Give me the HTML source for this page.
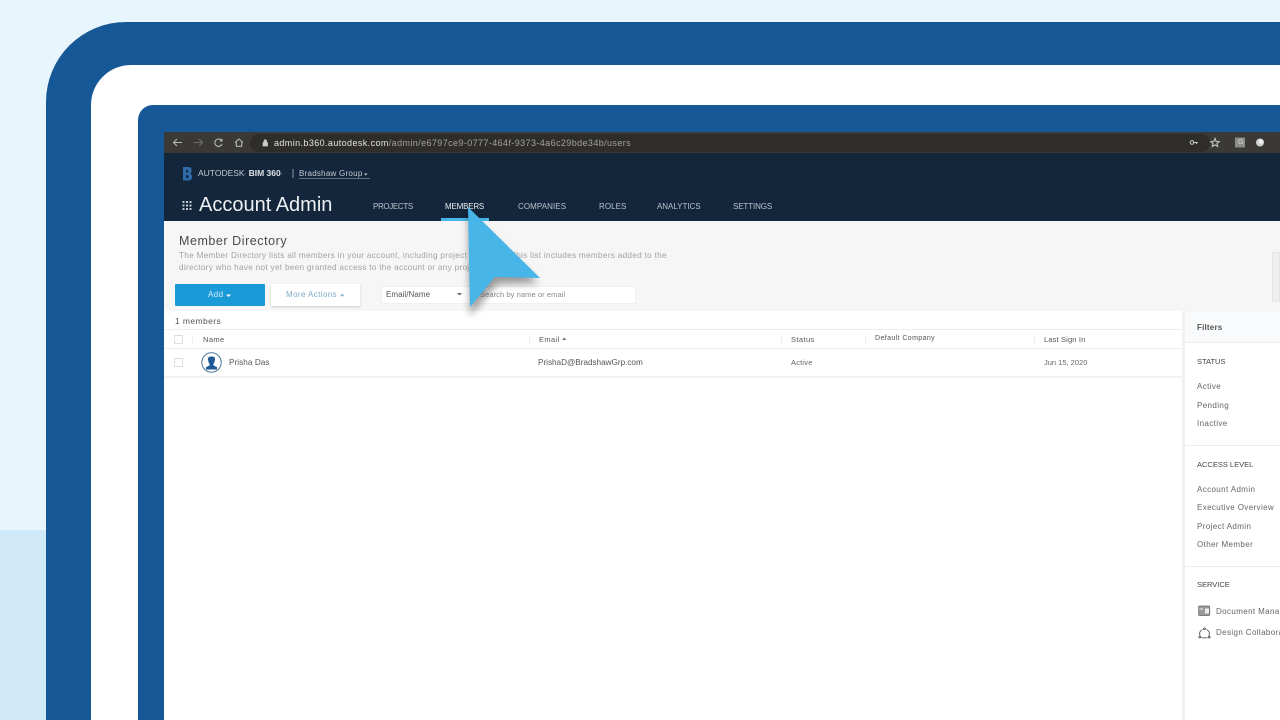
<!DOCTYPE html>
<html><head><meta charset="utf-8"><style>
html,body{margin:0;padding:0;width:1280px;height:720px;overflow:hidden;background:#e7f5fd}
body{position:relative;font-family:"Liberation Sans",sans-serif}
div,span.t{position:absolute;box-sizing:border-box}
.t{white-space:nowrap;line-height:12px;font-size:8px;color:#555;letter-spacing:.35px}
.nav{color:#b9c2cb;font-size:8px;top:201px}
.h{color:#555;font-size:7.5px;top:334px;letter-spacing:.4px}
.fl{color:#666;font-size:8px;letter-spacing:.38px;left:1197px}
.fh{color:#444;font-size:7.5px;letter-spacing:0;left:1197px}
.line{height:1px;background:#eeeeee}
svg{position:absolute;left:0;top:0}
</style></head><body>
<div style="left:0;top:530px;width:46px;height:190px;background:#cfe9f9"></div>
<div style="left:46px;top:22px;right:0;bottom:0;background:#165795;border-radius:80px 0 0 0"></div>
<div style="left:91px;top:65px;right:0;bottom:0;background:#fff;border-radius:40px 0 0 0"></div>
<div style="left:138px;top:105px;right:0;bottom:0;background:#165795;border-radius:15px 0 0 0"></div>
<div style="left:164px;top:132px;right:0;bottom:0;background:#fff"></div>
<div style="left:164px;top:132px;width:1116px;height:22px;background:#3a3936"></div>
<div style="left:250px;top:134px;width:960px;height:18px;background:#2e2d2a;border-radius:9px"></div>
<div style="left:164px;top:153px;width:1116px;height:68px;background:#13263c"></div>
<div style="left:164px;top:221px;width:1116px;height:91px;background:#f6f6f6"></div>

<svg width="1280" height="720" fill="none" stroke="#b5b5b3" stroke-width="1.1">
<path d="M182 142.500H173.500M177 139L173.500 142.500L177 146"/>
<path d="M194 142.500H202.500M199 139L202.500 142.500L199 146" stroke="#6d6c69"/>
<path d="M221.500 140.500A3.700 3.700 0 1 0 222 144M222 138.800V141H219.800"/>
<path d="M235 142.500L239 139L243 142.500M236.300 141.800V146.300H241.700V141.800"/>
<path d="M263 142.500V146H267.500V142.500H263M264 142.500V141A1.200 1.200 0 0 1 266.500 141V142.500" fill="#c9c9c7" stroke="#c9c9c7" stroke-width=".7"/>
<circle cx="1192" cy="142.500" r="1.800" stroke="#c5c5c3"/>
<path d="M1194 142.500H1198M1196.500 142.500V144" stroke="#c5c5c3"/>
<path d="M1215 138.500L1216.200 141.500L1219.200 141.700L1216.900 143.600L1217.700 146.500L1215 144.900L1212.300 146.500L1213.100 143.600L1210.800 141.700L1213.800 141.500Z" stroke="#c5c5c3"/>
<rect x="1235" y="137.500" width="10" height="10" fill="#8c8c8c" stroke="none"/>
<circle cx="1260" cy="142.500" r="4" fill="#cfcfcf" stroke="none"/>
<circle cx="1261" cy="141.500" r="2.200" fill="#f4f4f4" stroke="none"/>
<path d="M183 167H188.500C192.500 167 192.500 173 189.800 173.800C193.300 174.600 193.300 180.500 188.500 180.500H183Z" fill="#2e6ba8" stroke="none"/>
<path d="M186 170H188V172.500H186ZM186 175.200H188.500V178H186Z" fill="#13263c" stroke="none"/>
<path d="M293 169V178" stroke="#aeb6be" stroke-width=".8"/>
<path d="M299 178.500H370" stroke="#aeb6be" stroke-width=".6"/>
<g fill="#c4cbd2" stroke="none">
<rect x="182.500" y="201" width="2" height="2"/><rect x="186" y="201" width="2" height="2"/><rect x="189.500" y="201" width="2" height="2"/>
<rect x="182.500" y="204.500" width="2" height="2"/><rect x="186" y="204.500" width="2" height="2"/><rect x="189.500" y="204.500" width="2" height="2"/>
<rect x="182.500" y="208" width="2" height="2"/><rect x="186" y="208" width="2" height="2"/><rect x="189.500" y="208" width="2" height="2"/>
</g>
</svg>

<span class="t" style="left:1238px;top:137px;font-size:7px;color:#d8d8d8;letter-spacing:0">G</span>
<span class="t" style="left:274px;top:137px;font-size:9px;color:#e3e3e1;letter-spacing:.4px">admin.b360.autodesk.com<span style="color:#a3a29f">/admin/e6797ce9-0777-464f-9373-4a6c29bde34b/users</span></span>
<span class="t" style="left:198px;top:167px;font-size:8.500px;color:#c3cad1;letter-spacing:0">AUTODESK<span style="font-size:4px">&#176;</span> <b style="color:#dfe3e7;letter-spacing:0">BIM 360</b><span style="font-size:4px">&#176;</span></span>
<span class="t" style="left:299px;top:168px;font-size:8px;color:#c3cad1;letter-spacing:.25px">Bradshaw Group</span>
<span class="t" style="left:199px;top:194px;font-size:20px;line-height:22px;color:#eef1f3;letter-spacing:0">Account Admin</span>
<span class="t nav" style="left:373px;letter-spacing:-.35px">PROJECTS</span>
<span class="t nav" style="left:445px;color:#e8ecef;letter-spacing:-.2px">MEMBERS</span>
<span class="t nav" style="left:518px;letter-spacing:.08px">COMPANIES</span>
<span class="t nav" style="left:599px;letter-spacing:.05px">ROLES</span>
<span class="t nav" style="left:657px;letter-spacing:-.03px">ANALYTICS</span>
<span class="t nav" style="left:733px;letter-spacing:-.12px">SETTINGS</span>
<div style="left:441px;top:218px;width:48px;height:3px;background:#47b5e8"></div>

<span class="t" style="left:179px;top:234px;font-size:12.500px;line-height:14px;color:#4a4a4a;letter-spacing:.55px">Member Directory</span>
<span class="t" style="left:179px;top:250px;font-size:8.200px;color:#a2a2a2;letter-spacing:.3px">The Member Directory lists all members in your account, including project members. This list includes members added to the</span>
<span class="t" style="left:179px;top:262px;font-size:8.200px;color:#a2a2a2;letter-spacing:.3px">directory who have not yet been granted access to the account or any projects.</span>

<div style="left:175px;top:284px;width:90px;height:22px;background:#1b9ad8;border-radius:1px"></div>
<span class="t" style="left:208px;top:289px;color:#d5effb;font-size:8px;letter-spacing:.45px">Add</span>
<div style="left:271px;top:284px;width:89px;height:22px;background:#fff;box-shadow:0 1px 2px rgba(0,0,0,.18)"></div>
<span class="t" style="left:286px;top:289px;color:#7ba9c4;font-size:8px;letter-spacing:.4px">More Actions</span>
<div style="left:381px;top:286px;width:255px;height:18px;background:#fff;border:1px solid #f0f0f0"></div>
<span class="t" style="left:386px;top:289px;color:#555;font-size:8px;letter-spacing:.05px">Email/Name</span>
<span class="t" style="left:480px;top:289px;color:#8a8a8a;font-size:7.500px;letter-spacing:.08px">Search by name or email</span>
<div style="left:1272px;top:252px;width:8px;height:50px;background:#efefef;border:1px solid #e6e6e6"></div>

<div style="left:164px;top:311px;width:1018px;height:409px;background:#fff"></div>
<span class="t" style="left:175px;top:315px;font-size:8.500px;color:#555;letter-spacing:.4px">1 members</span>
<div class="line" style="left:164px;top:329px;width:1018px"></div>
<div style="left:174px;top:335px;width:9px;height:9px;border:1px solid #dedede"></div>
<div class="line" style="left:192px;top:336px;width:1px;height:8px"></div>
<span class="t h" style="left:203px">Name</span>
<div class="line" style="left:529px;top:336px;width:1px;height:8px"></div>
<span class="t h" style="left:539px">Email</span>
<div class="line" style="left:781px;top:336px;width:1px;height:8px"></div>
<span class="t h" style="left:791px">Status</span>
<div class="line" style="left:865px;top:336px;width:1px;height:8px"></div>
<span class="t h" style="left:875px;top:333px;font-size:7px">Default Company</span>
<div class="line" style="left:1034px;top:336px;width:1px;height:8px"></div>
<span class="t h" style="left:1044px;letter-spacing:.15px">Last Sign In</span>
<div class="line" style="left:164px;top:348px;width:1018px"></div>
<div style="left:174px;top:358px;width:9px;height:9px;border:1px solid #dedede"></div>
<svg style="left:201px;top:352px" width="21" height="21" viewBox="0 0 21 21">
<circle cx="10.500" cy="10.500" r="9.700" fill="#fff" stroke="#4c7896" stroke-width="1"/>
<path d="M7 6.500C7 3.800 14 3.800 14 6.500C14 9 13 11.500 12.300 12.300L12.300 13.300L16 15.300V17.500H5V15.300L8.700 13.300L8.700 12.300C8 11.500 7 9 7 6.500Z" fill="#1d5a96"/>
</svg>
<span class="t" style="left:229px;top:357px;font-size:8.200px;color:#555;letter-spacing:.05px">Prisha Das</span>
<span class="t" style="left:538px;top:357px;font-size:8.200px;color:#555;letter-spacing:-.02px">PrishaD@BradshawGrp.com</span>
<span class="t" style="left:791px;top:357px;font-size:7.500px;color:#666;letter-spacing:.2px">Active</span>
<span class="t" style="left:1044px;top:357px;font-size:7.500px;color:#666;letter-spacing:0">Jun 15, 2020</span>
<div class="line" style="left:164px;top:376px;width:1018px;height:2px;background:#f1f1f1"></div>

<div style="left:1182px;top:311px;width:3px;height:409px;background:#f1f1f1"></div>
<div style="left:1185px;top:312px;width:95px;height:31px;background:#f8fafc;border-bottom:1px solid #eee"></div>
<span class="t" style="left:1197px;top:322px;font-size:8px;color:#555;font-weight:bold;letter-spacing:.2px">Filters</span>
<span class="t fh" style="top:356px">STATUS</span>
<span class="t fl" style="top:381px">Active</span>
<span class="t fl" style="top:400px">Pending</span>
<span class="t fl" style="top:418px">Inactive</span>
<div class="line" style="left:1185px;top:445px;width:95px"></div>
<span class="t fh" style="top:459px">ACCESS LEVEL</span>
<span class="t fl" style="top:484px">Account Admin</span>
<span class="t fl" style="top:502px">Executive Overview</span>
<span class="t fl" style="top:521px">Project Admin</span>
<span class="t fl" style="top:539px">Other Member</span>
<div class="line" style="left:1185px;top:566px;width:95px"></div>
<span class="t fh" style="top:579px">SERVICE</span>
<svg style="left:1198px;top:605px" width="13" height="12" viewBox="0 0 13 12" fill="none">
<rect x=".7" y="1" width="11" height="9.500" rx="1" fill="#9a9a9a" stroke="#666" stroke-width=".8"/>
<path d="M7 3.500H11V8.500H7Z" fill="#eee"/><path d="M1.500 4H5" stroke="#eee"/>
</svg>
<div style="left:1216px;top:604px;width:64px;height:36px;overflow:hidden">
<span class="t fl" style="left:0;top:2px">Document Management</span>
<span class="t fl" style="left:0;top:23px">Design Collaboration</span>
</div>
<svg style="left:1198px;top:627px" width="13" height="13" viewBox="0 0 13 13" fill="none" stroke="#555" stroke-width=".9">
<path d="M4.500 2.500A4.500 4.500 0 0 0 2 8.500M8.500 2.500A4.500 4.500 0 0 1 11 8.500M3.500 10.800H9.500"/>
<circle cx="6.500" cy="1.800" r=".9"/><circle cx="1.800" cy="10" r=".9"/><circle cx="11.200" cy="10" r=".9"/>
</svg>

<svg width="1280" height="720">
<defs><filter id="b" x="-30%" y="-30%" width="160%" height="160%"><feGaussianBlur stdDeviation="4"/></filter></defs>
<path d="M364 173.500H367.500L365.700 175.500Z" fill="#cfd5da"/>
<path d="M226 294.500H231L228.500 297Z" fill="#fff"/>
<path d="M340 294.500H344.500L342.250 296.800Z" fill="#7ba9c4"/>
<path d="M457 293H462L459.500 295.500Z" fill="#666"/>
<path d="M562 340H566.500L564.250 337.500Z" fill="#777"/>
<path d="M468 213L538 283L497 284L470 316Z" fill="#000" opacity=".38" filter="url(#b)"/>
<path d="M468 207L540 278L495 277L470 307Z" fill="#47b5e8"/>
</svg>
</body></html>
